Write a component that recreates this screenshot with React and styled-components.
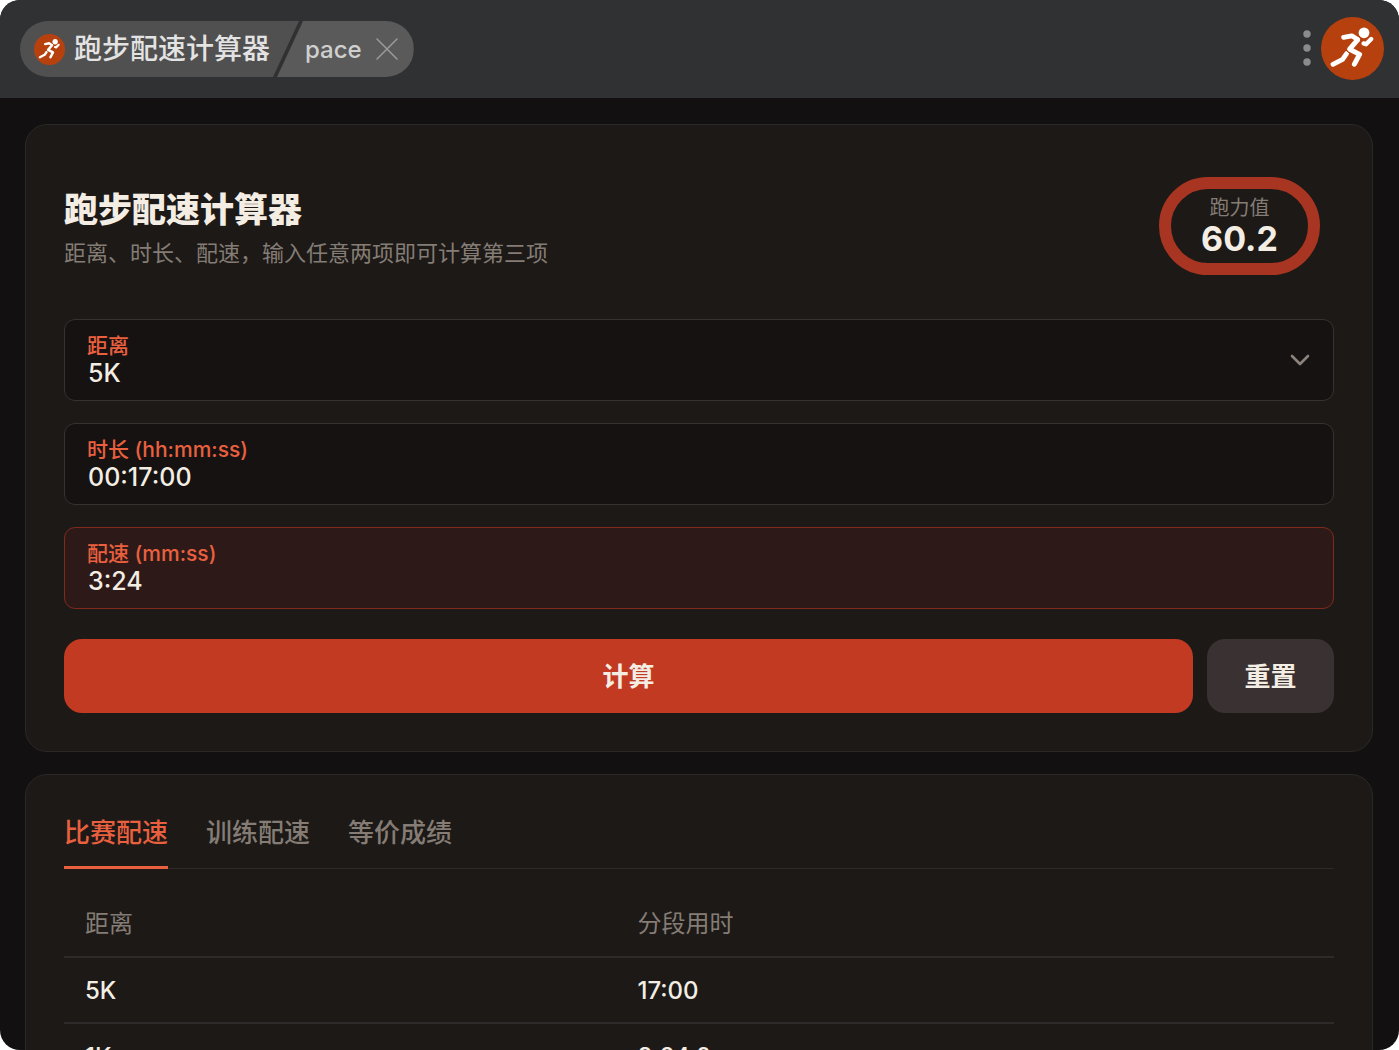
import React, { useState } from "react";
import styled, { createGlobalStyle } from "styled-components";

const GlobalStyle = createGlobalStyle`
  *, *::before, *::after { box-sizing: border-box; }
  body {
    margin: 0;
    background: #fff;
    font-family: Inter, "Noto Sans CJK SC", sans-serif;
    color: #f3ede4;
  }
  button, input, select { font: inherit; color: inherit; }
`;

const Window = styled.div`
  height: 100vh;
  display: flex;
  flex-direction: column;
  overflow: hidden;
  border-radius: 20px;
  background: #121010;
`;

const TitleBar = styled.header`
  flex: none;
  display: flex;
  align-items: center;
  justify-content: space-between;
  height: 98px;
  padding: 0 15px 0 20px;
  background: #303132;
`;

const Crumbs = styled.div`
  display: flex;
  height: 56px;
  border-radius: 28px;
  overflow: hidden;
`;

const AppCrumb = styled.div`
  display: flex;
  align-items: center;
  gap: 9px;
  padding: 0 29px 0 14px;
  background: #505050;
  clip-path: polygon(0 0, 100% 0, calc(100% - 26px) 100%, 0 100%);
  font-size: 28px;
  line-height: 40px;
  font-weight: 500;
  color: #e3e3e3;
`;

const PageCrumb = styled.div`
  display: flex;
  align-items: center;
  gap: 14px;
  margin-left: -22px;
  padding: 0 16px 0 28px;
  background: #5a5a5a;
  clip-path: polygon(26px 0, 100% 0, 100% 100%, 0 100%);
  font-size: 24px;
  font-weight: 500;
  color: #cfcfcf;
`;

const IconButton = styled.button`
  display: flex;
  padding: 0;
  border: 0;
  background: none;
  color: #9b9b9b;
  cursor: pointer;
`;

const Actions = styled.div`
  display: flex;
  align-items: center;
  gap: 9px;
  padding-bottom: 2px;
`;

const Page = styled.main`
  flex: 1;
  min-height: 0;
  overflow: hidden;
  display: flex;
  flex-direction: column;
  gap: 22px;
  padding: 26px 26px 0 25px;
`;

const Card = styled.section`
  flex: none;
  padding: 38px;
  border: 1px solid #2c2827;
  border-radius: 22px;
  background: #1c1917;
`;

const CardHeader = styled.div`
  display: flex;
  align-items: center;
  justify-content: space-between;
  padding: 14px 14px 14px 0;
  margin-bottom: 30px;
`;

const Title = styled.h1`
  margin: 0 0 2px;
  font-size: 34px;
  line-height: 52px;
  font-weight: 900;
`;

const Subtitle = styled.p`
  margin: 0;
  font-size: 22px;
  line-height: 30px;
  color: #857d75;
`;

const Badge = styled.div`
  display: flex;
  flex-direction: column;
  align-items: center;
  justify-content: center;
  width: 161px;
  height: 98px;
  padding-bottom: 2px;
  border: 12px solid #a83521;
  border-radius: 49px;
`;

const BadgeLabel = styled.span`
  font-size: 20px;
  line-height: 28px;
  color: #857d75;
`;

const BadgeValue = styled.strong`
  font-size: 34px;
  line-height: 34px;
  font-weight: 700;
`;

const Fields = styled.div`
  display: flex;
  flex-direction: column;
  gap: 22px;
`;

const Field = styled.label`
  display: flex;
  align-items: center;
  height: 82px;
  padding: 2px 23px 0 22px;
  border: 1px solid ${(p) => (p.$result ? "#7f2a1d" : "#373130")};
  border-radius: 11px;
  background: ${(p) => (p.$result ? "#2d1a18" : "#161211")};
`;

const FieldBody = styled.span`
  flex: 1;
  display: flex;
  flex-direction: column;
`;

const FieldLabel = styled.span`
  font-size: 21px;
  line-height: 24px;
  font-weight: 500;
  color: #e9603f;
`;

const Control = styled.input`
  appearance: none;
  width: 100%;
  height: 30px;
  padding: 0 0 0 1px;
  border: 0;
  outline: 0;
  background: none;
  font-size: 25px;
  line-height: 30px;
  font-weight: 500;
  color: #f3ede4;
`;

const Buttons = styled.div`
  display: flex;
  gap: 14px;
  margin-top: 30px;
`;

const Button = styled.button`
  flex: ${(p) => (p.$primary ? "1" : "none")};
  min-width: 127px;
  height: 74px;
  padding: 0 37px 3px;
  border: 0;
  border-radius: 18px;
  background: ${(p) => (p.$primary ? "#c33a23" : "#3a3132")};
  font-size: 26px;
  font-weight: 700;
  cursor: pointer;
`;

const Tabs = styled.div`
  display: flex;
  gap: 38px;
  border-bottom: 1px solid #2e2a29;
`;

const Tab = styled.button`
  height: 56px;
  margin-bottom: -1px;
  padding: 2px 0 15px;
  border: 0;
  border-bottom: 3px solid ${(p) => (p.$active ? "#e9603f" : "transparent")};
  background: none;
  font-size: 26px;
  line-height: 36px;
  font-weight: 500;
  color: ${(p) => (p.$active ? "#e9603f" : "#857d75")};
  cursor: pointer;
`;

const Table = styled.table`
  width: 100%;
  margin-top: 22px;
  border-collapse: separate;
  border-spacing: 0;
  table-layout: fixed;
  text-align: left;
`;

const HeadCell = styled.th`
  width: ${(p) => p.$width};
  height: 67px;
  padding: 0 21px 4px;
  border-bottom: 2px solid #2e2a29;
  font-size: 24px;
  font-weight: 400;
  color: #857d75;
`;

const Cell = styled.td`
  height: 66px;
  padding: 1px 21px 0;
  border-bottom: 2px solid #2e2a29;
  font-size: 24px;
  font-weight: 500;
`;

function Runner({ size }) {
  return (
    <svg width={size} height={size} viewBox="0 0 63 63" fill="none" aria-hidden="true">
      <circle cx="31.5" cy="31.5" r="31.5" fill="#b7410e" />
      <circle cx="43" cy="15.8" r="5.4" fill="#fff" />
      <g stroke="#fff" strokeWidth="4.8" strokeLinecap="round" strokeLinejoin="round">
        <path d="M22.6 20.4 L30.8 18.8 L36.6 22.6" />
        <path d="M36.6 22.8 L28.6 32.2 L38.6 37.4 L33.4 47.2" strokeWidth="5" />
        <path d="M25.6 36.6 L21.6 42.3 L12 47.3" />
        <path d="M42.6 26.4 L45 27.2 L50.2 22" strokeWidth="4.4" />
      </g>
      <path d="M23.6 31.8 L29.6 37.4" stroke="#b7410e" strokeWidth="1" />
    </svg>
  );
}

const TABS = ["比赛配速", "训练配速", "等价成绩"];
const SPLITS = [
  ["5K", "17:00"],
  ["1K", "3:24.0"],
];

export default function App() {
  const [tab, setTab] = useState(0);
  return (
    <>
      <GlobalStyle />
      <Window>
        <TitleBar>
          <Crumbs>
            <AppCrumb>
              <Runner size={31} />
              跑步配速计算器
            </AppCrumb>
            <PageCrumb>
              pace
              <IconButton aria-label="关闭">
                <svg width="22" height="22" viewBox="0 0 22 22" fill="none" stroke="currentColor" strokeWidth="1.5" strokeLinecap="round">
                  <path d="M1 1 L21 21 M21 1 L1 21" />
                </svg>
              </IconButton>
            </PageCrumb>
          </Crumbs>
          <Actions>
            <IconButton aria-label="菜单">
              <svg width="10" height="38" viewBox="0 0 10 38" fill="#8b8b8b">
                <circle cx="5" cy="5" r="3.7" />
                <circle cx="5" cy="19" r="3.7" />
                <circle cx="5" cy="33" r="3.7" />
              </svg>
            </IconButton>
            <Runner size={63} />
          </Actions>
        </TitleBar>
        <Page>
          <Card>
            <CardHeader>
              <div>
                <Title>跑步配速计算器</Title>
                <Subtitle>距离、时长、配速，输入任意两项即可计算第三项</Subtitle>
              </div>
              <Badge>
                <BadgeLabel>跑力值</BadgeLabel>
                <BadgeValue>60.2</BadgeValue>
              </Badge>
            </CardHeader>
            <Fields>
              <Field>
                <FieldBody>
                  <FieldLabel>距离</FieldLabel>
                  <Control as="select" defaultValue="5K">
                    <option>5K</option>
                  </Control>
                </FieldBody>
                <svg width="20" height="14" viewBox="0 0 20 14" fill="none" stroke="#8b827d" strokeWidth="2.6" strokeLinecap="round" strokeLinejoin="round">
                  <path d="M2 2 L10 10 L18 2" />
                </svg>
              </Field>
              <Field>
                <FieldBody>
                  <FieldLabel>时长 (hh:mm:ss)</FieldLabel>
                  <Control defaultValue="00:17:00" />
                </FieldBody>
              </Field>
              <Field $result>
                <FieldBody>
                  <FieldLabel>配速 (mm:ss)</FieldLabel>
                  <Control defaultValue="3:24" />
                </FieldBody>
              </Field>
            </Fields>
            <Buttons>
              <Button $primary>计算</Button>
              <Button>重置</Button>
            </Buttons>
          </Card>
          <Card>
            <Tabs role="tablist">
              {TABS.map((name, i) => (
                <Tab key={name} role="tab" aria-selected={i === tab} $active={i === tab} onClick={() => setTab(i)}>
                  {name}
                </Tab>
              ))}
            </Tabs>
            <Table>
              <thead>
                <tr>
                  <HeadCell $width="43.5%">距离</HeadCell>
                  <HeadCell>分段用时</HeadCell>
                </tr>
              </thead>
              <tbody>
                {SPLITS.map(([distance, time]) => (
                  <tr key={distance}>
                    <Cell>{distance}</Cell>
                    <Cell>{time}</Cell>
                  </tr>
                ))}
              </tbody>
            </Table>
          </Card>
        </Page>
      </Window>
    </>
  );
}
